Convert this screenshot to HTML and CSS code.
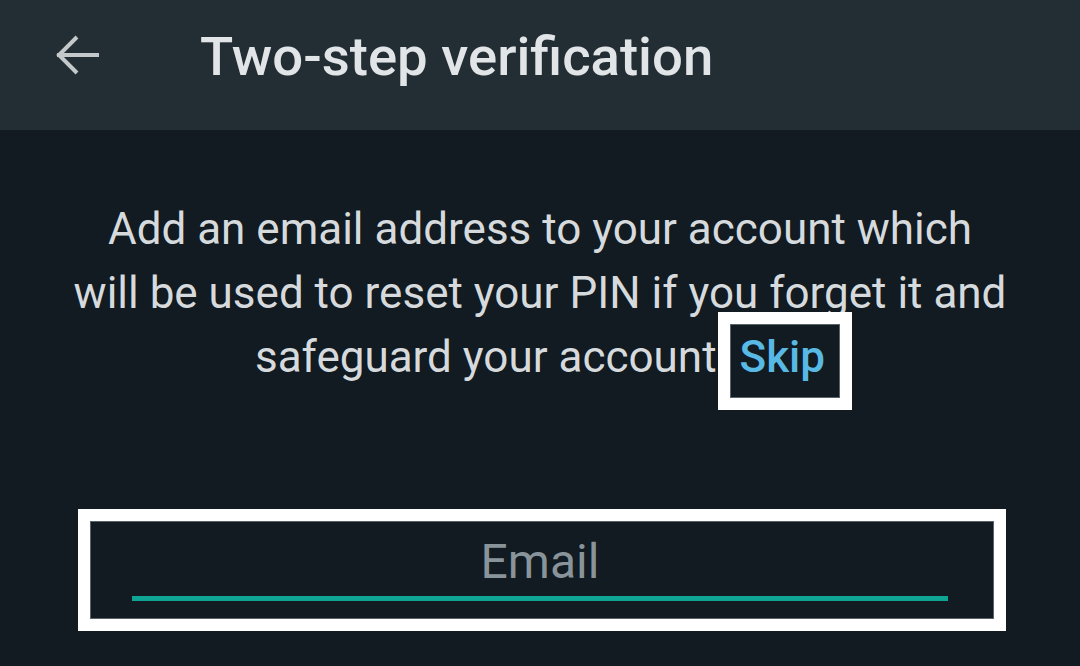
FILE: index.html
```html
<!DOCTYPE html>
<html lang="en">
<head>
<meta charset="utf-8">
<title>Two-step verification</title>
<link rel="stylesheet" href="styles.css">
</head>
<body>
<header class="appbar">
  <button class="back" aria-label="Back">
    <svg width="44" height="44" viewBox="0 0 44 44" fill="none" stroke="currentColor" stroke-width="4" stroke-linecap="square">
      <path d="M4 22H42"/>
      <path d="M22 4L4 22L22 40" stroke-linecap="butt"/>
    </svg>
  </button>
  <h1 class="title">Two-step verification</h1>
</header>
<main class="content">
  <p class="intro">Add an email address to your account which<br>will be used to reset your PIN if you forget it and<br>safeguard your account <a class="skip" href="#">Skip</a></p>
  <div class="mark">
    <input class="email" type="email" placeholder="Email">
  </div>
</main>
</body>
</html>
```
FILE: styles.css
```css
html, body {
  margin: 0;
  padding: 0;
}
body {
  width: 1080px;
  height: 666px;
  overflow: hidden;
  background: #111b21;
  font-family: Roboto, "Noto Sans", sans-serif;
}
.appbar {
  height: 113px;
  padding-bottom: 17px;
  background: #222d34;
  display: flex;
  align-items: center;
}
.back {
  margin-left: 55px;
  width: 44px;
  height: 44px;
  padding: 0;
  border: 0;
  background: none;
  color: #c3c8cb;
  display: flex;
  margin-top: -4px;
}
.title {
  margin: 0 0 0 101px;
  font-size: 54.5px;
  line-height: 1;
  font-weight: 500;
  color: #e2e5e7;
}
.content {
  padding-top: 67px;
  display: flex;
  flex-direction: column;
  align-items: center;
}
.intro {
  margin: 0;
  text-align: center;
  font-size: 44px;
  line-height: 64px;
  color: #d6dadd;
}
.skip {
  position: relative;
  margin-left: 12px;
  color: #58b9e4;
  font-weight: 500;
  text-decoration: none;
}
.skip::after {
  content: "";
  position: absolute;
  left: -21px;
  right: -27px;
  top: -19px;
  bottom: -27px;
  border: 12px solid #fff;
  box-shadow: inset 0 0 0 1px #59636a;
}
.mark {
  margin-top: 120px;
  margin-left: 4px;
  width: 816px;
  padding: 0 46px 18px 42px;
  border: 12px solid #fff;
  box-shadow: inset 0 0 0 1px #59636a;
}
.email {
  display: block;
  box-sizing: content-box;
  width: 100%;
  height: 69px;
  padding: 6px 0 0;
  margin: 0;
  border: 0;
  border-bottom: 5px solid #0fa594;
  background: transparent;
  font-family: Roboto, "Noto Sans", sans-serif;
  font-size: 48px;
  text-align: center;
  color: #e2e5e7;
  outline: none;
}
.email::placeholder {
  color: #89939a;
}
```
